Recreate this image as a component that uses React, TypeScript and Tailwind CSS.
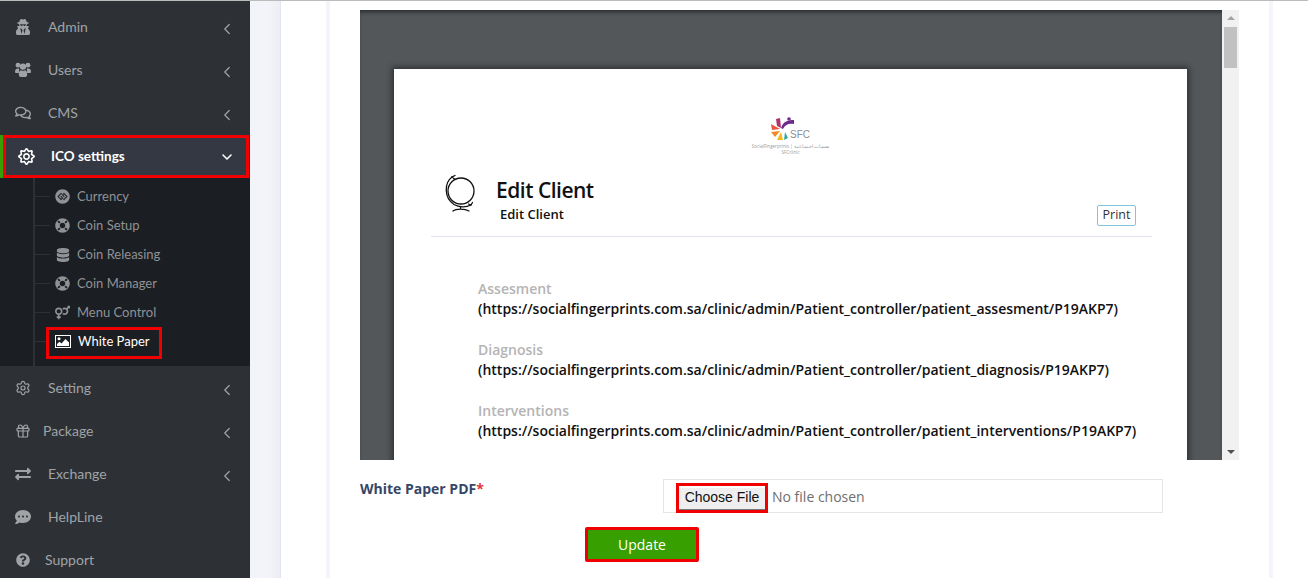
import type { ReactNode } from 'react';
import {
  FaUserSecret,
  FaRegComments,
  FaRegSun,
  FaGgCircle,
  FaLifeRing,
  FaDatabase,
  FaVenusMars,
  FaExchangeAlt,
  FaCommentDots,
  FaQuestionCircle,
} from 'react-icons/fa';
import { Settings, Gift, ChevronLeft, ChevronDown } from 'lucide-react';

// package versions of these two differ too much from the screenshot
const UsersIcon = () => (
  <svg width="16" height="15" viewBox="0 0 16 15" fill="currentColor" className="shrink-0">
    <circle cx="3" cy="3.2" r="2.4" />
    <circle cx="13" cy="3.2" r="2.4" />
    <circle cx="8" cy="4.6" r="3.2" />
    <path d="M0 10 C0 7.5 1 6.4 3 6.4 C3.6 6.4 4 6.6 4.2 6.8 C4 8 4 9.5 4.2 11 L1.4 11 C0.6 11 0 10.6 0 10 Z" />
    <path d="M16 10 C16 7.5 15 6.4 13 6.4 C12.4 6.4 12 6.6 11.8 6.8 C12 8 12 9.5 11.8 11 L14.6 11 C15.4 11 16 10.6 16 10 Z" />
    <path d="M3.8 12.6 C3.8 9.8 4.8 8.2 6 8.2 C7 8.9 9 8.9 10 8.2 C11.2 8.2 12.2 9.8 12.2 12.6 C12.2 14 11.4 15 10.4 15 L5.6 15 C4.6 15 3.8 14 3.8 12.6 Z" />
  </svg>
);

const PictureIcon = () => (
  <svg width="16" height="13" viewBox="0 0 16 13" className="shrink-0">
    <rect x="0.5" y="0.5" width="15" height="12" fill="none" stroke="#fff" />
    <circle cx="4" cy="3.8" r="1.5" fill="#fff" />
    <path d="M2 11 L2 9 L4.5 6.8 L6.5 8.5 L10.5 4 L14 7.5 L14 11 Z" fill="#fff" />
  </svg>
);

const topItems = [
  { label: 'Admin', icon: <FaUserSecret size={16} />, textClass: 'ml-[17px]' },
  { label: 'Users', icon: <UsersIcon />, textClass: 'ml-[17px]' },
  { label: 'CMS', icon: <FaRegComments size={16} />, textClass: 'ml-[17px]' },
];

const subItems = [
  { label: 'Currency', icon: <FaGgCircle size={15} /> },
  { label: 'Coin Setup', icon: <FaLifeRing size={15} /> },
  { label: 'Coin Releasing', icon: <FaDatabase size={14} /> },
  { label: 'Coin Manager', icon: <FaLifeRing size={15} /> },
  { label: 'Menu Control', icon: <FaVenusMars size={17} /> },
];

const bottomItems = [
  { label: 'Setting', icon: <Settings size={16} strokeWidth={1.8} />, textClass: 'ml-[17px]', arrow: true },
  { label: 'Package', icon: <Gift size={16} strokeWidth={1.8} />, textClass: 'ml-[12px]', arrow: true },
  { label: 'Exchange', icon: <FaExchangeAlt size={16} />, textClass: 'ml-[17px]', arrow: true },
  { label: 'HelpLine', icon: <FaCommentDots size={16} />, textClass: 'ml-[17px]', arrow: false },
  { label: 'Support', icon: <FaQuestionCircle size={14} />, textClass: 'ml-[14px]', arrow: false },
];

const sections = [
  { title: 'Assesment', url: 'https://socialfingerprints.com.sa/clinic/admin/Patient_controller/patient_assesment/P19AKP7' },
  { title: 'Diagnosis', url: 'https://socialfingerprints.com.sa/clinic/admin/Patient_controller/patient_diagnosis/P19AKP7' },
  { title: 'Interventions', url: 'https://socialfingerprints.com.sa/clinic/admin/Patient_controller/patient_interventions/P19AKP7' },
];

const NavRow = ({ icon, label, textClass, arrow }: { icon: ReactNode; label: string; textClass: string; arrow: boolean }) => (
  <li className="flex h-[43px] items-center pl-[15px] pr-[14px] text-[#a0a3a6]">
    <span className="flex w-4 justify-center">{icon}</span>
    <span className={textClass}>{label}</span>
    {arrow && <ChevronLeft size={18} strokeWidth={1.6} className="ml-auto mt-[4px]" />}
  </li>
);

const SubRow = ({ icon, label }: { icon: ReactNode; label: string }) => (
  <li className="flex h-[29px] items-center text-[#8f9296]">
    <span className="h-px w-[15px] bg-[#2d3136]" />
    <span className="ml-[5px] flex w-[15px] justify-center">{icon}</span>
    <span className="ml-[7px]">{label}</span>
  </li>
);

const Sidebar = () => (
  <aside className="w-[250px] shrink-0 bg-[#2d3136] pt-[4px] text-[14px] font-['Lato',sans-serif]">
    <ul>
      {topItems.map((item) => (
        <NavRow key={item.label} {...item} arrow />
      ))}
      <li className="mt-px h-[43px] border-l-[3px] border-[#37a000] bg-[#343842]">
        <div className="flex h-full w-[246px] items-center border-[3px] border-[#f00000] pl-[12px] pr-[11px] text-[13.5px] font-bold text-white">
          <FaRegSun size={17} />
          <span className="ml-[16px]">ICO settings</span>
          <ChevronDown size={16} strokeWidth={2.4} className="ml-auto" />
        </div>
      </li>
    </ul>
    <div className="bg-[#1b1e22] pl-[33px] text-[13px]">
      <ul className="border-l-2 border-[#2d3136] pb-[10px] pt-[4px]">
        {subItems.map((item) => (
          <SubRow key={item.label} {...item} />
        ))}
        <li className="-mb-[3px] flex h-[32px] items-start text-white">
          <span className="mt-[14px] h-px w-[11px] bg-[#2d3136]" />
          <div className="flex h-[32px] w-[116px] items-center border-[3px] border-[#f00000] pb-[3px] pl-[6px]">
            <PictureIcon />
            <span className="ml-[7px]">White Paper</span>
          </div>
        </li>
      </ul>
    </div>
    <ul>
      {bottomItems.map((item) => (
        <NavRow key={item.label} {...item} />
      ))}
    </ul>
  </aside>
);

const Globe = () => (
  <svg width="30" height="38" viewBox="0 0 30 38" fill="none" stroke="#111" strokeWidth="1.3" strokeLinecap="round" className="-mt-[2px]">
    <circle cx="16" cy="17" r="13" />
    <path d="M10 1.5 L7 3 L9.5 5" />
    <path d="M7 3 C-1 9 -1 24 9 30.5 C14 33.5 21 33.5 26 31" />
    <path d="M26 31 L27.5 28.5 M26 31 L23.5 30" />
    <path d="M15.5 33 L15.5 35 M8 37 C11 34.5 20 34.5 24 37" />
  </svg>
);

const Logo = () => (
  <div className="flex flex-col items-center">
    <div className="flex items-end">
      <svg width="24" height="24" viewBox="0 0 24 24">
        <path d="M5 2 L9 1 L10 11 L6 9 Z" fill="#b0336f" />
        <path d="M10 11 C12 5 16 3 23 3 L23 7 C17 6 14 8 12 12 Z" fill="#6d2b8c" />
        <circle cx="18" cy="2" r="1.8" fill="#6d2b8c" />
        <path d="M0 7 L9 12 L1 13 Z" fill="#e8573f" />
        <path d="M0 15 L9 14 L4 20 Z" fill="#f08a24" />
        <path d="M6 23 L10 15 L12 23 Z" fill="#f5b81f" />
        <path d="M13 23 L14 15 L17 21 Z" fill="#35a7a0" />
      </svg>
      <span className="-ml-[5px] text-[10px] leading-[13px] text-[#8a8f94] font-['Liberation_Sans',sans-serif]">SFC</span>
    </div>
    <p className="mt-[2px] text-[4.5px] leading-[7px] text-[#9a9a9a]">SocialFingerprints | بصمات اجتماعية</p>
    <p className="text-[4.5px] leading-[5px] text-[#9a9a9a]">SFCclinic</p>
  </div>
);

const PdfViewer = () => (
  <div className="flex h-[450px] overflow-hidden">
    <div className="h-full w-[862px] overflow-hidden bg-[#53575a] pl-[34px] pt-[59px] shadow-[inset_0_4px_4px_-2px_rgba(0,0,0,0.5)]">
      <div className="h-[500px] w-[793px] bg-white pt-[48px] text-[#111] shadow-[0_0_6px_2px_rgba(0,0,0,0.45)] font-['Open_Sans',sans-serif]">
        <Logo />
        <div className="ml-[37px] mr-[35px] mt-[21px] flex items-end justify-between border-b border-[#e2e4ec] pb-[10px] pl-[14px] pr-[16px]">
          <div className="flex items-start">
            <Globe />
            <div className="mb-[2px] ml-[22px]">
              <h1 className="-ml-[1px] text-[21px] font-semibold leading-[28px] tracking-[-0.5px]">Edit Client</h1>
              <p className="ml-[3px] text-[13px] font-semibold leading-[20px]">Edit Client</p>
            </div>
          </div>
          <button className="h-[21px] w-[39px] rounded-[2px] border border-[#7fc6dc] text-[12.5px] leading-none text-[#333]">Print</button>
        </div>
        <div className="mt-[42px] px-[84px]">
          {sections.map((s) => (
            <div key={s.title} className="mb-[21px] text-[14px] leading-[20px]">
              <p className="font-semibold text-[#b4b4b4]">{s.title}</p>
              <p className="whitespace-nowrap font-semibold tracking-[-0.01px]">({s.url})</p>
            </div>
          ))}
        </div>
      </div>
    </div>
    <div className="flex h-full w-[17px] flex-col items-center bg-[#f1f1f1]">
      <span className="mt-[6px] h-0 w-0 border-x-[4px] border-b-[4px] border-x-transparent border-b-[#a3a3a3]" />
      <span className="mt-[7px] h-[41px] w-[13px] bg-[#c1c1c1]" />
      <span className="mb-[6px] mt-auto h-0 w-0 border-x-[4px] border-t-[4px] border-x-transparent border-t-[#505050]" />
    </div>
  </div>
);

const UploadForm = () => (
  <div className="font-['Open_Sans',sans-serif]">
    <div className="mt-[19px] flex items-start">
      <label className="w-[303px] text-[14px] font-bold leading-[20px] text-[#374767]">
        White Paper PDF<span className="text-[#e5343d]">*</span>
      </label>
      <div className="flex h-[34px] w-[500px] items-center border border-[#e5e5e5] pl-[12px] pt-[4px] text-[14px] text-[#6e6e6e]">
        <div className="border-[3px] border-[#f00000]">
          <button className="h-[22px] w-[86px] border-b border-[#777] bg-[#efefef] pb-[2px] text-[14px] leading-none text-[#111] font-['Liberation_Sans',sans-serif]">
            Choose File
          </button>
        </div>
        <span className="-mt-[4px] ml-[4px]">No file chosen</span>
      </div>
    </div>
    <div className="ml-[225px] mt-[14px]">
      <button className="h-[35px] w-[114px] rounded-[2px] border-[3px] border-[#f00000] bg-[#37a000] text-[14px] text-white">Update</button>
    </div>
  </div>
);

export default function App() {
  return (
    <div className="h-[578px] w-[1308px] overflow-hidden border-t border-[#bbbbbb] bg-white">
      <div className="flex h-full">
        <Sidebar />
        <div className="w-[31px] shrink-0 border-r border-[#e2e5f0] bg-gradient-to-r from-[#f3f4f9] from-60% to-[#eceef4]" />
        <main className="ml-[45px] w-[947px] shrink-0 border-x-4 border-[#f5f5f9] px-[30px] pt-[9px]">
          <PdfViewer />
          <UploadForm />
        </main>
      </div>
    </div>
  );
}
